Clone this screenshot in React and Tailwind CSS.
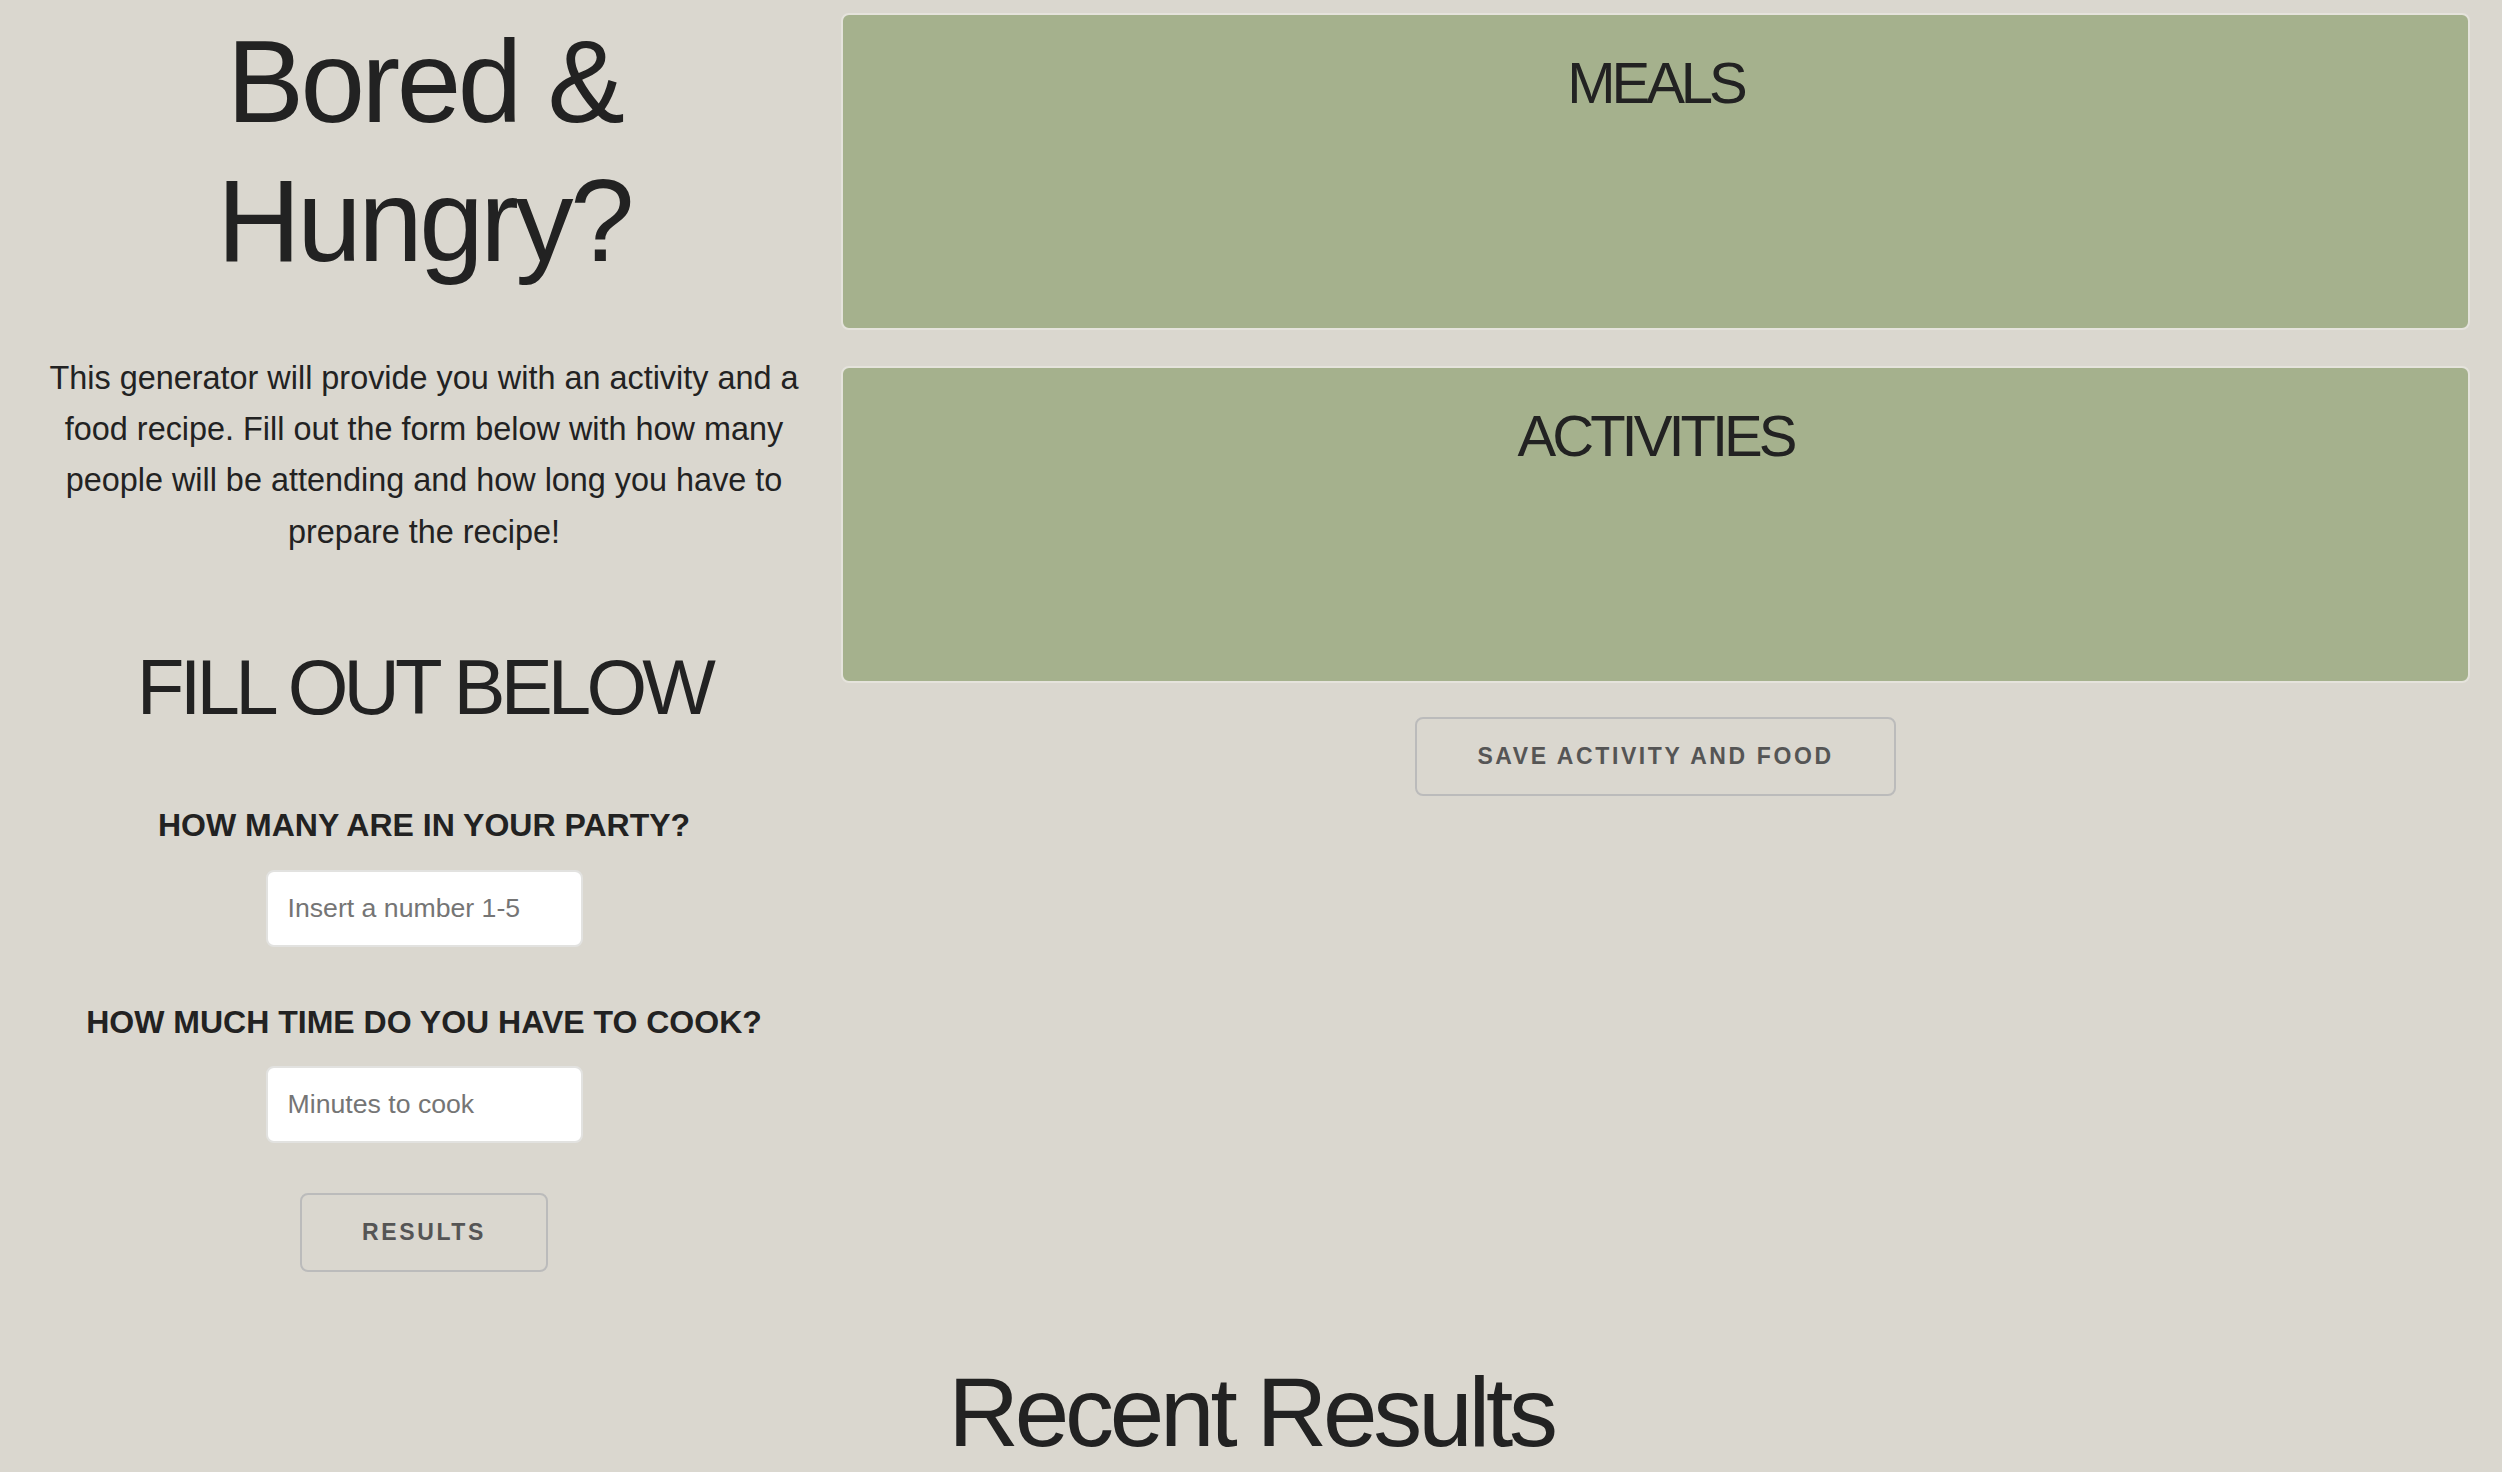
import { useState } from 'react';

function Field({ label, placeholder, value, onChange, first }) {
  return (
    <>
      <label className={`${first ? 'mt-[66px]' : 'mt-[50px]'} block text-[32px] leading-[51.2px] font-bold`}>
        {label}
      </label>
      <input
        type="text"
        value={value}
        onChange={(e) => onChange(e.target.value)}
        placeholder={placeholder}
        className="mt-[18px] w-[317px] h-[77px] bg-white border-2 border-[#e2e2e0] rounded-[8px] px-[20px] text-[26.67px] text-[#222] placeholder:text-[#757575] outline-none"
      />
    </>
  );
}

function ResultBox({ title, className = '' }) {
  return (
    <div className={`h-[317px] rounded-[8px] bg-[#a5b18d] border-2 border-[#e5e3dc] pt-[33px] text-center ${className}`}>
      <h2 className="text-[58px] leading-[69.6px] tracking-[-4px] font-normal">{title}</h2>
    </div>
  );
}

export default function App() {
  const [party, setParty] = useState('');
  const [minutes, setMinutes] = useState('');

  return (
    <div className="min-h-screen bg-[#dad7cf] text-[#222] font-['Liberation_Sans',Arial,Helvetica,sans-serif]">
      <div className="flex items-start pt-[13px] pl-[8px] pr-[32px]">
        <section className="w-[832px] shrink-0 flex flex-col items-center text-center">
          <h1 className="text-[116px] leading-[139px] tracking-[-3.5px] font-normal">
            Bored &amp;<br />Hungry?
          </h1>
          <p className="mt-[62px] w-[800px] text-[32.4px] leading-[51.2px]">
            This generator will provide you with an activity and a food recipe. Fill out the form below with how many people will be attending and how long you have to prepare the recipe!
          </p>
          <h2 className="mt-[83px] text-[78px] leading-[93.6px] tracking-[-4.8px] font-normal">FILL OUT BELOW</h2>

          <Field first label="HOW MANY ARE IN YOUR PARTY?" placeholder="Insert a number 1-5" value={party} onChange={setParty} />
          <Field label="HOW MUCH TIME DO YOU HAVE TO COOK?" placeholder="Minutes to cook" value={minutes} onChange={setMinutes} />

          <button className="mt-[50px] h-[79px] px-[60px] border-2 border-[#bbbbbb] rounded-[8px] text-[23px] font-bold tracking-[2.6px] text-[#555] uppercase">
            Results
          </button>
        </section>

        <section className="flex-1 ml-[1px] flex flex-col">
          <ResultBox title="MEALS" />
          <ResultBox title="ACTIVITIES" className="mt-[36px]" />
          <div className="flex justify-center mt-[34px]">
            <button className="h-[79px] px-[60px] border-2 border-[#bbbbbb] rounded-[8px] text-[23px] font-bold tracking-[2.6px] text-[#555] uppercase">
              Save activity and food
            </button>
          </div>
        </section>
      </div>

      <h2 className="mt-[82px] text-center text-[98px] leading-[117.6px] tracking-[-4.2px] font-normal">Recent Results</h2>
    </div>
  );
}
